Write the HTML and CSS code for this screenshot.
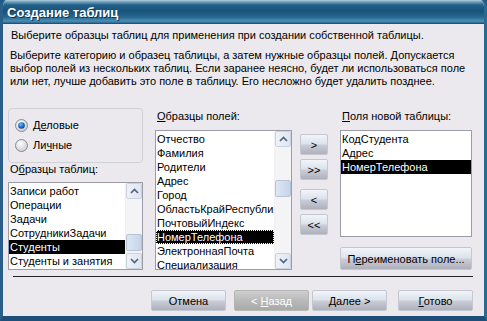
FILE: index.html
```html
<!DOCTYPE html>
<html lang="ru">
<head>
<meta charset="utf-8">
<title>Создание таблиц</title>
<link rel="stylesheet" href="styles.css">
</head>
<body>
<div class="window">
  <div class="titlebar"><span class="title">Создание таблиц</span></div>
  <div class="client">
    <p class="lead">Выберите образцы таблиц для применения при создании собственной таблицы.</p>
    <p class="info">Выберите категорию и образец таблицы, а затем нужные образцы полей. Допускается<br>выбор полей из нескольких таблиц. Если заранее неясно, будет ли использоваться поле<br>или нет, лучше добавить это поле в таблицу. Его несложно будет удалить позднее.</p>
    <div class="main">
      <div class="col col-left">
        <div class="radiobox">
          <div class="radio">
            <svg class="radio-icon" width="13" height="13" viewBox="0 0 13 13"><defs><radialGradient id="rb" cx="40%" cy="35%" r="70%"><stop offset="0" stop-color="#ffffff"/><stop offset="1" stop-color="#c8c8d0"/></radialGradient><radialGradient id="dot" cx="40%" cy="35%" r="70%"><stop offset="0" stop-color="#6ec0ff"/><stop offset="0.6" stop-color="#1a6cc8"/><stop offset="1" stop-color="#0a3c80"/></radialGradient></defs><circle cx="6.5" cy="6.5" r="6" fill="url(#rb)" stroke="#8a8a96"/><circle cx="6.5" cy="6.5" r="3.3" fill="url(#dot)"/></svg>
            <span>Д<u>е</u>ловые</span>
          </div>
          <div class="radio">
            <svg class="radio-icon" width="13" height="13" viewBox="0 0 13 13"><defs><radialGradient id="rb2" cx="40%" cy="35%" r="70%"><stop offset="0" stop-color="#ffffff"/><stop offset="1" stop-color="#c8c8d0"/></radialGradient></defs><circle cx="6.5" cy="6.5" r="6" fill="url(#rb2)" stroke="#8a8a96"/></svg>
            <span>Ли<u>ч</u>ные</span>
          </div>
        </div>
        <div class="label label-tables">О<u>б</u>разцы таблиц:</div>
        <div class="list list-tables">
          <div class="items">
            <div class="item">Записи работ</div>
            <div class="item">Операции</div>
            <div class="item">Задачи</div>
            <div class="item">СотрудникиЗадачи</div>
            <div class="item selected">Студенты</div>
            <div class="item">Студенты и занятия</div>
          </div>
          <div class="scrollbar">
            <div class="sb-btn"><svg width="9" height="6" viewBox="0 0 9 6"><polyline points="1,5 4.5,1.5 8,5" fill="none" stroke="#4d6185" stroke-width="1.6"/></svg></div>
            <div class="sb-track"><div class="sb-thumb" style="margin-top:35px"></div></div>
            <div class="sb-btn"><svg width="9" height="6" viewBox="0 0 9 6"><polyline points="1,1 4.5,4.5 8,1" fill="none" stroke="#4d6185" stroke-width="1.6"/></svg></div>
          </div>
        </div>
      </div>
      <div class="col col-mid">
        <div class="label label-top"><u>О</u>бразцы полей:</div>
        <div class="list list-fields">
          <div class="items">
            <div class="item">Отчество</div>
            <div class="item">Фамилия</div>
            <div class="item">Родители</div>
            <div class="item">Адрес</div>
            <div class="item">Город</div>
            <div class="item">ОбластьКрайРеспублика</div>
            <div class="item">ПочтовыйИндекс</div>
            <div class="item selected focus">НомерТелефона</div>
            <div class="item">ЭлектроннаяПочта</div>
            <div class="item">Специализация</div>
          </div>
          <div class="scrollbar">
            <div class="sb-btn"><svg width="9" height="6" viewBox="0 0 9 6"><polyline points="1,5 4.5,1.5 8,5" fill="none" stroke="#4d6185" stroke-width="1.6"/></svg></div>
            <div class="sb-track"><div class="sb-thumb" style="margin-top:33px"></div></div>
            <div class="sb-btn"><svg width="9" height="6" viewBox="0 0 9 6"><polyline points="1,1 4.5,4.5 8,1" fill="none" stroke="#4d6185" stroke-width="1.6"/></svg></div>
          </div>
        </div>
      </div>
      <div class="col col-move">
        <button class="btn move"><span>&gt;</span></button>
        <button class="btn move"><span>&gt;&gt;</span></button>
        <button class="btn move move-gap"><span>&lt;</span></button>
        <button class="btn move"><span>&lt;&lt;</span></button>
      </div>
      <div class="col col-right">
        <div class="label label-top"><u>П</u>оля новой таблицы:</div>
        <div class="list list-new">
          <div class="items">
            <div class="item">КодСтудента</div>
            <div class="item">Адрес</div>
            <div class="item selected">НомерТелефона</div>
          </div>
        </div>
        <button class="btn rename"><span>П<u>е</u>реименовать поле...</span></button>
      </div>
    </div>
    <div class="sep"></div>
    <div class="footer">
      <button class="btn wiz"><span>Отмена</span></button>
      <button class="btn wiz disabled"><span>&lt; <u>Н</u>азад</span></button>
      <button class="btn wiz next"><span><u>Д</u>алее &gt;</span></button>
      <button class="btn wiz"><span><u>Г</u>отово</span></button>
    </div>
  </div>
</div>
</body>
</html>
```

FILE: styles.css
```css
* { box-sizing: border-box; }
html, body { margin: 0; padding: 0; }
body {
  width: 487px;
  height: 321px;
  overflow: hidden;
  background: #1f5a85;
  font-family: "Liberation Sans", Arial, sans-serif;
  font-size: 11px;
  color: #000;
}
.window {
  width: 487px;
  height: 321px;
  background: #ebe9ed;
  border-left: 3px solid #2a5f8a;
  border-right: 3px solid #2a6a90;
  border-bottom: 5px solid #1f4f78;
  border-radius: 7px 7px 0 0;
  display: flex;
  flex-direction: column;
  overflow: hidden;
}
.titlebar {
  height: 24px;
  flex: none;
  margin: 0 -3px;
  padding-left: 7px;
  display: flex;
  align-items: center;
  border-radius: 7px 7px 0 0;
  background: linear-gradient(#b4cfdc 0, #6c9cb8 2px, #22618a 5px, #1a5279 11px, #25668f 17px, #4c8fb5 21px, #2a6890 23px, #143f60 24px);
}
.title {
  color: #fff;
  font-weight: bold;
  font-size: 13px;
  padding-top: 1px;
  text-shadow: 1px 1px 0 #0d3350;
}
.client {
  flex: 1;
  padding: 0 0 0 5px;
}
p { margin: 0; line-height: 13px; }
.lead { margin-top: 5px; padding-left: 3px; }
.info { margin-top: 7px; padding-left: 2px; }
u { text-decoration: underline; text-underline-offset: 1px; }

.main {
  display: flex;
  margin-top: 14px;
  height: 168px;
}
.col { display: flex; flex-direction: column; }
.col-left { width: 135px; }
.col-mid { width: 137px; margin-left: 12px; }
.col-move { width: 28px; margin-left: 8px; padding-top: 32px; }
.col-right { width: 132px; margin-left: 12px; }

.radiobox {
  margin-top: 6px;
  height: 55px;
  border: 1px solid #d0d0d8;
  border-radius: 4px;
  padding: 9px 0 0 6px;
  display: flex;
  flex-direction: column;
  gap: 6px;
}
.radio { display: flex; align-items: center; gap: 5px; height: 14px; }
.radio-icon { flex: none; }

.label { line-height: 13px; padding-left: 2px; }
.label-tables { margin-top: 0; }
.label-top { margin-top: 8px; }

.list {
  background: #fff;
  border: 1px solid #9c9ca8;
  display: flex;
  overflow: hidden;
}
.list-tables { margin-top: 6px; height: 88px; }
.list-fields { margin-top: 7px; height: 140px; }
.list-new { margin-top: 7px; height: 109px; }
.items { flex: 1; min-width: 0; padding-top: 1px; overflow: hidden; }
.item {
  height: 14px;
  line-height: 14px;
  padding-left: 1px;
  white-space: nowrap;
  overflow: hidden;
}
.item.selected { background: #000; color: #fff; }
.item.focus { outline: 1px dotted #fff; outline-offset: -1px; }

.scrollbar {
  width: 17px;
  flex: none;
  display: flex;
  flex-direction: column;
  background: #f4f4f6;
  border-left: 1px solid #f0f0f0;
}
.sb-btn {
  height: 16px;
  flex: none;
  display: flex;
  align-items: center;
  justify-content: center;
  background: linear-gradient(90deg, #eef2f8, #dfe6f0);
  border: 1px solid #c9d2e0;
  border-radius: 2px;
}
.sb-track { flex: 1; }
.sb-thumb {
  height: 17px;
  background: linear-gradient(90deg, #dde7f4, #c6d4e8);
  border: 1px solid #b7c4d8;
  border-radius: 2px;
}

.btn {
  font: inherit;
  color: #000;
  padding: 0;
  border: 1px solid #c4c6d0;
  border-radius: 2px;
  background: linear-gradient(#f2f5f9 0, #dbe3ec 45%, #c9ccd6 55%, #aeb0bb 100%);
  display: flex;
  align-items: center;
  justify-content: center;
  white-space: pre;
}
.move { width: 28px; height: 21px; margin-bottom: 4px; }
.move-gap { margin-top: 5px; }
.rename { margin-top: 10px; height: 23px; width: 132px; }

.sep {
  margin: 6px 11px 0 5px;
  height: 1px;
  background: #222;
}
.footer {
  display: flex;
  margin-top: 13px;
  padding-left: 143px;
}
.wiz { width: 75px; height: 21px; }
.wiz.disabled {
  margin-left: 8px;
  color: #fff;
  border-color: #b6b6b6;
  background: linear-gradient(#cfcfcf, #b9b9b9 50%, #a9a9a9);
}
.wiz.next { margin-left: 3px; }
.wiz.next + .wiz { margin-left: 11px; }
```
